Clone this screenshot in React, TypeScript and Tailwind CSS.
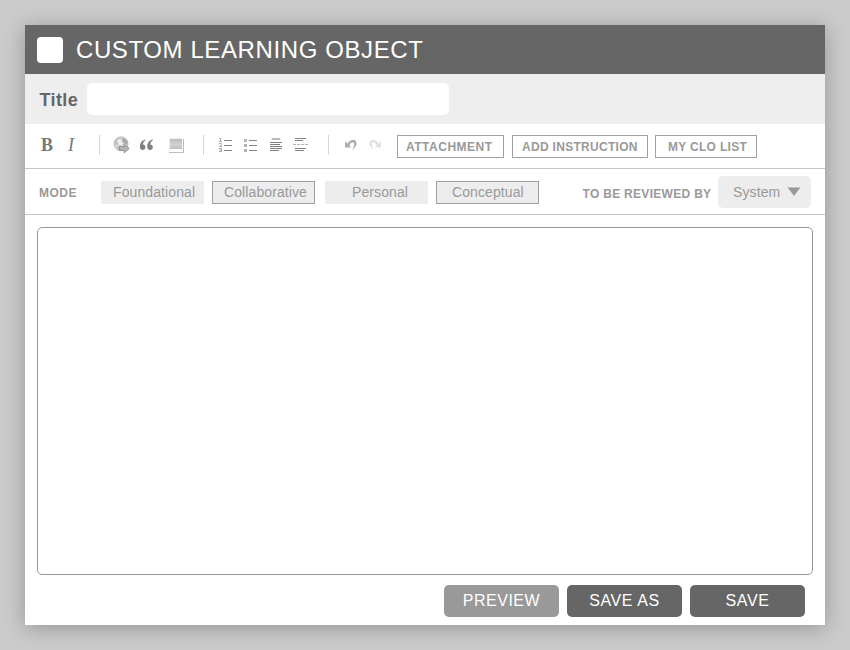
import React from 'react';

function Separator({ className }: { className: string }) {
  return <span className={`h-5 w-px shrink-0 bg-[#d6d6d6] ${className}`} />;
}

function GlobeIcon() {
  return (
    <svg className="ml-[13px] shrink-0" width="18" height="18" viewBox="0 0 18 18">
      <circle cx="8" cy="7.8" r="6.9" fill="#dcdcdc" stroke="#b4b4b4" strokeWidth="1" />
      <path d="M2 4.5 5 1.8 8 2.2 6.5 4 4.5 5.5 5.5 8 3.5 9.5 1.5 8Z" fill="#c2c2c2" />
      <path d="M9 2 12.5 3 14.6 6 14 8.5 11 7.5 9.5 5.5Z" fill="#a8a8a8" />
      <path d="M3.5 10 7 10.5 7.5 14 5 13.5Z" fill="#bebebe" />
      <path d="M3.5 4.5 7 3 10 7.5 7 9.5Z" fill="#efefef" />
      <path d="M6.5 10.4h4.7V8.1l5 4.4-5 4.4v-2.5H6.5Z" fill="#b4b4b4" stroke="#8c8c8c" strokeWidth=".9" />
    </svg>
  );
}

function QuoteIcon() {
  return (
    <svg className="ml-2 shrink-0" width="15" height="12" viewBox="0 0 15 12">
      <g fill="#808080">
        <path d="M6.3.6C2.8 1.3.9 4 .9 7.5c0 2.2 1 3.5 2.8 3.5 1.6 0 2.7-1.1 2.7-2.8S5.4 5.7 4 5.6c.1-1.8 1-3.3 2.5-4.3Z" />
        <path d="M13.7.6C10.2 1.3 8.2 4 8.2 7.5c0 2.2 1 3.5 2.8 3.5 1.6 0 2.8-1.1 2.8-2.8s-1.1-2.5-2.5-2.6c.1-1.8 1-3.3 2.6-4.3Z" />
      </g>
    </svg>
  );
}

function ImageIcon() {
  return (
    <svg className="ml-[14px] shrink-0" width="16" height="16" viewBox="0 0 16 16">
      <defs>
        <linearGradient id="sky" x1="0" y1="0" x2="0" y2="1">
          <stop offset="0" stopColor="#bcbcbc" />
          <stop offset=".55" stopColor="#d2d2d2" />
          <stop offset="1" stopColor="#bebebe" />
        </linearGradient>
      </defs>
      <path d="M1.5 15V1.5H15" fill="none" stroke="#f0f0f0" />
      <path d="M15.5 2v13.5H1" fill="none" stroke="#bcbcbc" />
      <path d="M2 2h12v10H2Z" fill="url(#sky)" />
    </svg>
  );
}

function NumberedIcon() {
  return (
    <svg className="ml-[15px] shrink-0" width="14" height="16" viewBox="0 0 14 16">
      <path d="M0 1.5h1.5v3M0 4.5h3M0 6.5h2.5v1.2L.5 9.5H3M0 11.5h2.5v3H0M.5 13h2" fill="none" stroke="#ababab" strokeWidth="1" />
      <path d="M5 3.5h8M5 8.5h8M5 13.5h8" stroke="#868686" />
    </svg>
  );
}

function BulletIcon() {
  return (
    <svg className="ml-[11px] shrink-0" width="14" height="16" viewBox="0 0 14 16">
      <path d="M0 2h3v3H0ZM0 7h3v3H0ZM0 12h3v3H0Z" fill="#b3b3b3" />
      <path d="M5 3.5h8M5 8.5h8M5 13.5h8" stroke="#868686" />
    </svg>
  );
}

function CenterIcon() {
  return (
    <svg className="ml-3 shrink-0" width="13" height="16" viewBox="0 0 13 16">
      <path d="M2 1h8v2H2Z" fill="#bababa" />
      <path d="M0 5.5h12M0 7.5h10M0 9.5h12M0 11.5h12M0 13.5h9" stroke="#7f7f7f" />
    </svg>
  );
}

function BreakIcon() {
  return (
    <svg className="ml-[10px] shrink-0" width="16" height="16" viewBox="0 0 16 16">
      <path d="M2 1.5h11M2 3.5h8M2 11.5h11M2 13.5h9" stroke="#858585" />
      <path d="M0 7.5h15" stroke="#b5b5b5" strokeDasharray="3 1" />
    </svg>
  );
}

function TurnIcon({ redo = false }: { redo?: boolean }) {
  return (
    <svg
      className={redo ? 'ml-3 shrink-0 -scale-x-100' : 'ml-[15px] shrink-0'}
      width="13"
      height="12"
      viewBox="0 0 13 12"
    >
      <path
        d="M1 2.2V8.5H7.3L5.4 6.6C6.4 4.4 7.6 3.3 8.8 3.3c1.8 0 2 3-.6 7.5C12 8.5 13.2 5 12.2 2.7 10.6-.5 6.2.3 3.3 4.5Z"
        fill={redo ? '#e2e2e2' : '#adadad'}
      />
    </svg>
  );
}

function OutlineButton({ label, className }: { label: string; className: string }) {
  return (
    <button
      className={`flex h-[23px] shrink-0 items-center border border-[#a0a0a0] text-xs font-bold whitespace-nowrap text-[#999] ${className}`}
    >
      <span className="relative top-px">{label}</span>
    </button>
  );
}

function ModeButton({ label, className, on = false }: { label: string; className: string; on?: boolean }) {
  return (
    <button
      className={`flex h-[23px] w-[103px] shrink-0 items-center border bg-[#ededed] text-[14px] tracking-[0.1px] whitespace-nowrap text-[#999] ${on ? 'border-[#a0a0a0]' : 'border-[#ededed]'} ${className}`}
    >
      {label}
    </button>
  );
}

function ActionButton({ label, className }: { label: string; className: string }) {
  return (
    <button className={`h-8 w-[115px] rounded-[5px] text-center text-base text-white ${className}`}>
      {label}
    </button>
  );
}

export default function App() {
  return (
    <div className="h-[650px] w-[850px] overflow-hidden bg-[#cbcbcb] p-[25px] font-['Liberation_Sans',Arial,sans-serif]">
      <main className="flex h-[600px] w-[800px] flex-col bg-white shadow-[0_3px_20px_rgba(0,0,0,0.27)]">
        <header className="flex h-[49px] shrink-0 items-center bg-[#666] pl-3">
          <span className="h-[26px] w-[26px] rounded-[4px] bg-white" />
          <h1 className="ml-[13px] pt-px text-[24px] leading-none tracking-[0.6px] whitespace-nowrap text-white">
            CUSTOM LEARNING OBJECT
          </h1>
        </header>

        <div className="flex h-[50px] shrink-0 items-center bg-[#eee] pl-[14.5px]">
          <label htmlFor="title" className="w-[47.5px] pt-px text-lg font-bold tracking-[0.4px] text-[#666]">
            Title
          </label>
          <input id="title" className="h-8 w-[362px] rounded-[5px] bg-white px-2 outline-none" />
        </div>

        <div className="flex h-[45px] shrink-0 items-center border-b border-[#c6c6c6] pb-[2px] pl-4">
          <span className="w-[27px] font-['Liberation_Serif',serif] text-lg font-bold text-[#777]">B</span>
          <span className="w-[11px] font-['Liberation_Serif',serif] text-lg text-[#777] italic">I</span>
          <Separator className="ml-5" />
          <GlobeIcon />
          <QuoteIcon />
          <ImageIcon />
          <Separator className="ml-[19px]" />
          <NumberedIcon />
          <BulletIcon />
          <CenterIcon />
          <BreakIcon />
          <Separator className="ml-[19px]" />
          <TurnIcon />
          <TurnIcon redo />
          <div className="mt-[2px] ml-[15px] flex">
            <OutlineButton label="ATTACHMENT" className="w-[107px] pl-2 tracking-[0.5px]" />
            <OutlineButton label="ADD INSTRUCTION" className="ml-2 w-[136px] pl-[9px] tracking-[0.3px]" />
            <OutlineButton label="MY CLO LIST" className="ml-[7px] w-[102px] pl-3 tracking-[0.3px]" />
          </div>
        </div>

        <div className="flex h-[46px] shrink-0 items-center border-b border-[#c6c6c6] pl-[14px]">
          <span className="w-[62px] pt-[3px] text-xs font-bold tracking-[0.5px] text-[#999]">MODE</span>
          <div className="flex pt-[2px]">
            <ModeButton label="Foundational" className="pl-[11px]" />
            <ModeButton label="Collaborative" on className="ml-2 pl-[11px]" />
            <ModeButton label="Personal" className="ml-[10px] pl-[26px]" />
            <ModeButton label="Conceptual" on className="ml-2 pl-[15px]" />
          </div>
          <span className="ml-[43.5px] w-[135.5px] pt-[4px] text-xs font-bold tracking-[0.3px] whitespace-nowrap text-[#999]">
            TO BE REVIEWED BY
          </span>
          <button className="flex h-8 w-[93px] items-center rounded-[5px] bg-[#ededed] pl-[15px] text-[14px] text-[#999]">
            <span className="w-[54px] pt-px text-left tracking-[0.1px]">System</span>
            <svg width="14" height="9" viewBox="0 0 14 9">
              <path d="M.5.5h13L7 8.8Z" fill="#999" />
            </svg>
          </button>
        </div>

        <section className="mt-3 ml-3 h-[348px] w-[776px] shrink-0 rounded-[5px] border border-[#999] bg-white" />

        <footer className="mt-[10px] mr-5 flex justify-end gap-2">
          <ActionButton label="PREVIEW" className="bg-[#999] tracking-[0.5px]" />
          <ActionButton label="SAVE AS" className="bg-[#666] tracking-[0.6px]" />
          <ActionButton label="SAVE" className="bg-[#666] tracking-[0.6px]" />
        </footer>
      </main>
    </div>
  );
}
